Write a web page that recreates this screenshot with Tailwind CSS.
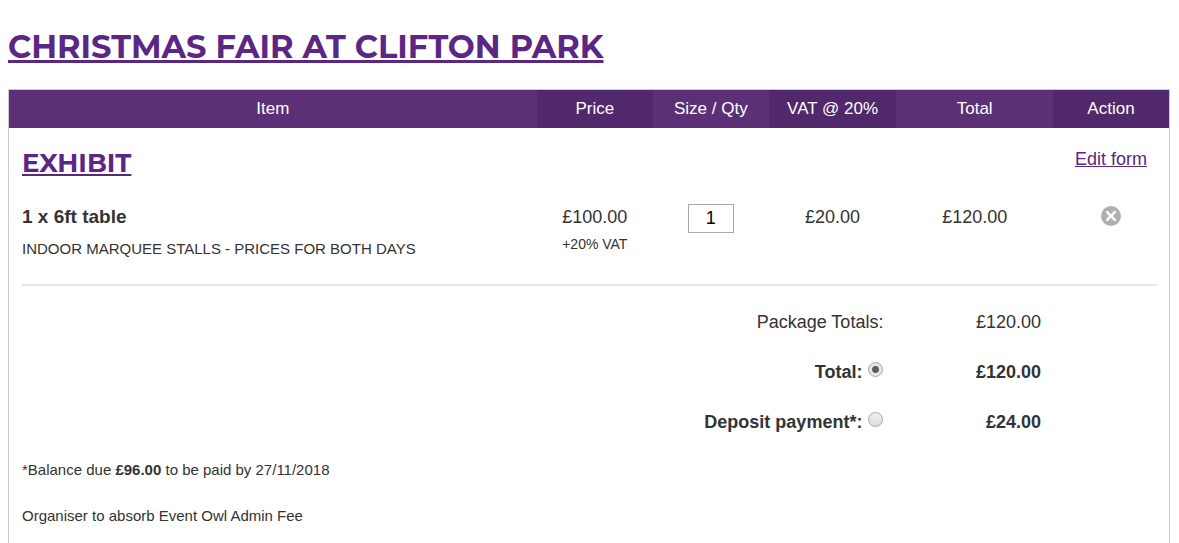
<!DOCTYPE html>
<html lang="en">
<head>
  <meta charset="UTF-8" />
  <meta name="viewport" content="width=device-width, initial-scale=1.0" />
  <title>Christmas Fair at Clifton Park</title>
  <script src="https://cdn.jsdelivr.net/npm/@tailwindcss/browser@4"></script>
</head>
<body class="bg-white font-['Liberation_Sans',Arial,sans-serif] text-[#333333] overflow-x-hidden [scrollbar-width:none]">

  <main class="pl-2 pr-[9px] pt-6">
    <h1 class="mb-5 text-[32px] leading-[45px] font-bold text-[#5b2684] font-['Montserrat',Inter,sans-serif]">
      <a href="#" class="underline decoration-[3px] underline-offset-2 [text-decoration-skip-ink:none]">CHRISTMAS FAIR AT CLIFTON PARK</a>
    </h1>

    <div class="border border-[#cccccc] pb-10">
      <!-- Basket -->
      <table class="w-full table-fixed border-collapse text-center text-[18px] leading-6">
        <colgroup>
          <col class="w-[45.5%]" />
          <col class="w-[10%]" />
          <col class="w-[10%]" />
          <col class="w-[11%]" />
          <col class="w-[13.5%]" />
          <col class="w-[10%]" />
        </colgroup>
        <thead>
          <tr class="h-[38px] text-[17px] text-white">
            <th class="bg-[#5b3077] font-normal">Item</th>
            <th class="bg-[#51286b] font-normal">Price</th>
            <th class="bg-[#5b3077] font-normal">Size / Qty</th>
            <th class="bg-[#51286b] font-normal">VAT @ 20%</th>
            <th class="bg-[#5b3077] font-normal">Total</th>
            <th class="bg-[#51286b] font-normal">Action</th>
          </tr>
        </thead>
        <tbody>
          <tr class="h-[72px] align-top">
            <td colspan="5" class="pl-[13px] pt-5 text-left">
              <h2 class="text-[26px] leading-[30px] font-bold text-[#5b2684] font-['Montserrat',Inter,sans-serif]">
                <a href="#" class="underline decoration-2 underline-offset-2">EXHIBIT</a>
              </h2>
            </td>
            <td class="pt-[19px]"><a href="#" class="text-[#5b2684] underline">Edit form</a></td>
          </tr>

          <tr class="h-[84px] align-top">
            <td class="pl-[13px] pt-[5px] text-left">
              <h3 class="text-[19px] leading-6 font-bold">1 x 6ft table</h3>
              <p class="mt-2 text-[15px]">INDOOR MARQUEE STALLS - PRICES FOR BOTH DAYS</p>
            </td>
            <td class="pt-[5px]">
              £100.00
              <p class="mt-[3px] text-[14px]">+20% VAT</p>
            </td>
            <td class="pt-1">
              <input type="text" value="1" aria-label="Size / Qty" class="mx-auto block h-[29px] w-[46px] border border-[#a9a9a9] text-center text-[18px] text-black" />
            </td>
            <td class="pt-[5px]">£20.00</td>
            <td class="pt-[5px]">£120.00</td>
            <td class="pt-[6px]">
              <button type="button" aria-label="Remove" class="mx-auto block">
                <svg class="block size-5" viewBox="0 0 20 20">
                  <circle cx="10" cy="10" r="10" fill="#b0b0b0" />
                  <path d="M6.2 6.2L13.8 13.8M13.8 6.2L6.2 13.8" stroke="#fff" stroke-width="2.5" stroke-linecap="round" />
                </svg>
              </button>
            </td>
          </tr>

          <tr>
            <td colspan="6" class="pl-[13px] pr-3 pb-[11px]"><hr class="border-t-2 border-[#e5e5e5]" /></td>
          </tr>

          <!-- Totals -->
          <tr class="h-[50px] text-right">
            <td colspan="4" class="pr-[13px]">Package Totals:</td>
            <td class="pr-3">£120.00</td>
            <td></td>
          </tr>
          <tr class="h-[50px] text-right font-bold">
            <td colspan="4" class="pr-[13px]">
              <div class="flex items-center justify-end gap-[6px]">
                <label for="pay-total">Total:</label>
                <input type="radio" id="pay-total" name="payment" checked class="mb-[5px] size-[15px] appearance-none rounded-full border border-[#a8a8a8] bg-linear-to-b from-[#eeeeee] to-[#dddddd] checked:bg-[radial-gradient(circle,#5c5c5c_3px,#e6e6e6_4px)]" />
              </div>
            </td>
            <td class="pr-3">£120.00</td>
            <td></td>
          </tr>
          <tr class="h-[50px] text-right font-bold">
            <td colspan="4" class="pr-[13px]">
              <div class="flex items-center justify-end gap-[6px]">
                <label for="pay-deposit">Deposit payment*:</label>
                <input type="radio" id="pay-deposit" name="payment" class="mb-[5px] size-[15px] appearance-none rounded-full border border-[#a8a8a8] bg-linear-to-b from-[#eeeeee] to-[#dddddd] checked:bg-[radial-gradient(circle,#5c5c5c_3px,#e6e6e6_4px)]" />
              </div>
            </td>
            <td class="pr-3">£24.00</td>
            <td></td>
          </tr>
        </tbody>
      </table>

      <!-- Notes -->
      <div class="space-y-[22px] pt-[11px] pl-[13px] text-[15px] leading-6">
        <p>*Balance due <b>£96.00</b> to be paid by 27/11/2018</p>
        <p>Organiser to absorb Event Owl Admin Fee</p>
      </div>
    </div>
  </main>

</body>
</html>
